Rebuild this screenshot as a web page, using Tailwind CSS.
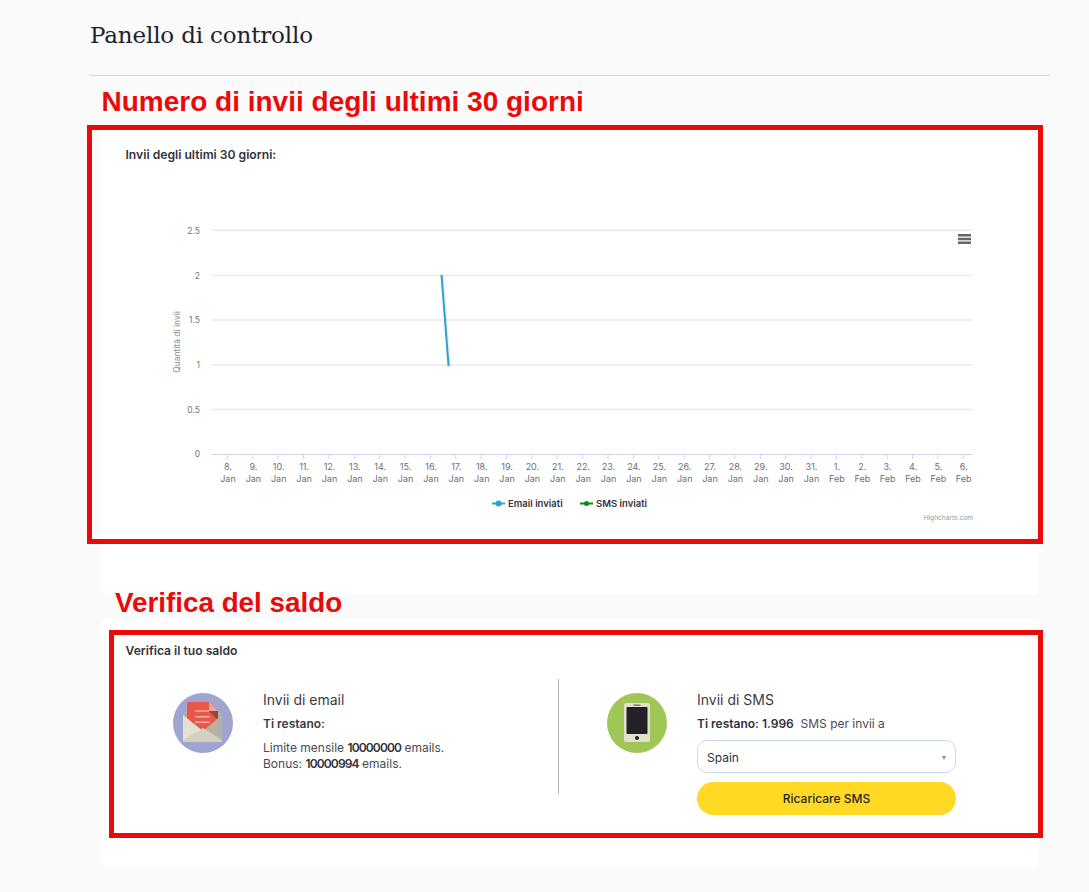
<!DOCTYPE html>
<html lang="it">
<head>
<meta charset="utf-8">
<title>Panello di controllo</title>
<script src="https://cdn.jsdelivr.net/npm/@tailwindcss/browser@4"></script>
</head>
<body class="bg-[#fafafa] font-['Inter',sans-serif] text-[#3b3b44] overflow-hidden">
<div class="relative w-[1089px] h-[892px] overflow-hidden pl-[90px] pr-[39px]">
  <div class="h-[76px] border-b border-[#d6d9de] pt-[20px]">
    <h1 class="font-['DejaVu_Serif',serif] text-[23px] leading-[30px] tracking-[-0.16px] font-normal text-[#1c2230]">Panello di controllo</h1>
  </div>

  <section class="mx-[11px] mt-[52px] h-[467px] bg-white rounded-lg pt-[20px]">
    <h2 class="pl-[24.5px] text-[12.150px] leading-[14px] font-semibold text-[#33333b]">Invii degli ultimi 30 giorni:</h2>
    <svg class="block mt-[8px] font-['Inter',sans-serif]" width="938" height="360" viewBox="101 170 938 360" xmlns="http://www.w3.org/2000/svg">
      <g stroke="#eaeaed" stroke-width="1.5">
        <line x1="211" x2="973" y1="230.2" y2="230.2"/>
        <line x1="211" x2="973" y1="275.5" y2="275.5"/>
        <line x1="211" x2="973" y1="320" y2="320"/>
        <line x1="211" x2="973" y1="365" y2="365"/>
        <line x1="211" x2="973" y1="409.5" y2="409.5"/>
      </g>
      <line x1="211" x2="973" y1="454.5" y2="454.5" stroke="#ccd6eb"/>
      <g stroke="#ccd6eb">
        <path d="M227.5 454v5M252.9 454v5M278.2 454v5M303.6 454v5M329 454v5M354.4 454v5M379.7 454v5M405.1 454v5M430.5 454v5M455.8 454v5M481.2 454v5M506.6 454v5M531.9 454v5M557.3 454v5M582.7 454v5M608.1 454v5M633.4 454v5M658.8 454v5M684.2 454v5M709.5 454v5M734.9 454v5M760.3 454v5M785.6 454v5M811 454v5M836.4 454v5M861.8 454v5M887.1 454v5M912.5 454v5M937.9 454v5M963.2 454v5"/>
      </g>
      <g fill="#74747b" font-size="8.5" text-anchor="end">
        <text x="200" y="234">2.5</text>
        <text x="200" y="279">2</text>
        <text x="200" y="323">1.5</text>
        <text x="200" y="368">1</text>
        <text x="200" y="413">0.5</text>
        <text x="200" y="457">0</text>
      </g>
      <text transform="translate(180 342) rotate(-90)" text-anchor="middle" fill="#85858c" font-size="8.5">Quantità di invii</text>
      <path d="M441.5 275 L448.5 365 L449.5 365" fill="none" stroke="#000" stroke-opacity="0.08" stroke-width="3" transform="translate(1 1)"/>
      <path d="M441.5 275 L448.5 365 L449.5 365" fill="none" stroke="#2aa3cf" stroke-width="2"/>
      <g fill="#6e6e75" font-size="9" text-anchor="middle">
        <text x="228" y="470">8.</text><text x="228" y="482">Jan</text>
        <text x="253.4" y="470">9.</text><text x="253.4" y="482">Jan</text>
        <text x="278.7" y="470">10.</text><text x="278.7" y="482">Jan</text>
        <text x="304.1" y="470">11.</text><text x="304.1" y="482">Jan</text>
        <text x="329.5" y="470">12.</text><text x="329.5" y="482">Jan</text>
        <text x="354.9" y="470">13.</text><text x="354.9" y="482">Jan</text>
        <text x="380.2" y="470">14.</text><text x="380.2" y="482">Jan</text>
        <text x="405.6" y="470">15.</text><text x="405.6" y="482">Jan</text>
        <text x="431" y="470">16.</text><text x="431" y="482">Jan</text>
        <text x="456.3" y="470">17.</text><text x="456.3" y="482">Jan</text>
        <text x="481.7" y="470">18.</text><text x="481.7" y="482">Jan</text>
        <text x="507.1" y="470">19.</text><text x="507.1" y="482">Jan</text>
        <text x="532.4" y="470">20.</text><text x="532.4" y="482">Jan</text>
        <text x="557.8" y="470">21.</text><text x="557.8" y="482">Jan</text>
        <text x="583.2" y="470">22.</text><text x="583.2" y="482">Jan</text>
        <text x="608.6" y="470">23.</text><text x="608.6" y="482">Jan</text>
        <text x="633.9" y="470">24.</text><text x="633.9" y="482">Jan</text>
        <text x="659.3" y="470">25.</text><text x="659.3" y="482">Jan</text>
        <text x="684.7" y="470">26.</text><text x="684.7" y="482">Jan</text>
        <text x="710" y="470">27.</text><text x="710" y="482">Jan</text>
        <text x="735.4" y="470">28.</text><text x="735.4" y="482">Jan</text>
        <text x="760.8" y="470">29.</text><text x="760.8" y="482">Jan</text>
        <text x="786.1" y="470">30.</text><text x="786.1" y="482">Jan</text>
        <text x="811.5" y="470">31.</text><text x="811.5" y="482">Jan</text>
        <text x="836.9" y="470">1.</text><text x="836.9" y="482">Feb</text>
        <text x="862.3" y="470">2.</text><text x="862.3" y="482">Feb</text>
        <text x="887.6" y="470">3.</text><text x="887.6" y="482">Feb</text>
        <text x="913" y="470">4.</text><text x="913" y="482">Feb</text>
        <text x="938.4" y="470">5.</text><text x="938.4" y="482">Feb</text>
        <text x="963.7" y="470">6.</text><text x="963.7" y="482">Feb</text>
      </g>
      <path d="M958 235.200h13M958 239h13M958 242.800h13" stroke="#666" stroke-width="2.500"/>
      <line x1="492" x2="505" y1="503.5" y2="503.5" stroke="#2aa3cf" stroke-width="2"/>
      <circle cx="498.5" cy="503.5" r="3" fill="#2aa3cf"/>
      <text x="508" y="507" font-size="9.5" font-weight="600" fill="#33333b">Email inviati</text>
      <line x1="580" x2="593" y1="503.5" y2="503.5" stroke="#0a8a1e" stroke-width="2"/>
      <circle cx="586.5" cy="503.5" r="2.5" fill="#0a8a1e"/>
      <text x="596" y="507" font-size="9.5" font-weight="600" fill="#33333b">SMS inviati</text>
      <text x="973" y="519.500" text-anchor="end" font-size="6.6" fill="#9a9aa0">Highcharts.com</text>
    </svg>
  </section>

  <section class="mx-[11px] mt-[24px] h-[249px] bg-white rounded-lg pt-[25px]">
    <h2 class="pl-[24.5px] text-[12.150px] leading-[14px] font-semibold text-[#33333b]">Verifica il tuo saldo</h2>
    <div class="flex items-start mt-[21px]">
      <div class="w-[457px] pl-[72px] pt-[14px] flex gap-[30px]">
        <svg class="shrink-0" width="60" height="60" viewBox="0 0 60 60" xmlns="http://www.w3.org/2000/svg">
          <circle cx="30" cy="30" r="30" fill="#9fa5d0"/>
          <path d="M10 21 L14 17 H45 L49 21 V47 a2 2 0 0 1 -2 2 H12 a2 2 0 0 1 -2 -2 Z" fill="#b3b09f"/>
          <path d="M14 11 a2 2 0 0 1 2 -2 H36 L45 18 V34 L30 43 L14 34 Z" fill="#e8574a"/>
          <path d="M36 18 H45 V27 Z" fill="#8a4a3f"/>
          <path d="M36 9 L45 18 H36 Z" fill="#f6a497"/>
          <path d="M22 18h14M22 23.700h15M22 29.300h15" stroke="#f6b1a6" stroke-width="1.500"/>
          <path d="M10 22 L30 38 L10 48 Z" fill="#e4e1d3"/>
          <path d="M49 22 L30 38 L49 48 Z" fill="#b5b2a1"/>
          <path d="M10 47 L30 35 L49 47 V47.500 a1.500 1.500 0 0 1 -1.500 1.500 H11.500 a1.500 1.500 0 0 1 -1.500 -1.500 Z" fill="#d3d0c0"/>
        </svg>
        <div>
          <h3 class="text-[14px] leading-[16px] mt-[-1px] font-normal">Invii di email</h3>
          <p class="text-[12px] leading-[16px] font-semibold mt-[8px]">Ti restano:</p>
          <p class="text-[12px] leading-[15.500px] mt-[8px] text-[#4a4a52]">Limite mensile <b class="font-semibold tracking-[-0.85px] text-[#33333b]">10000000</b> emails.<br>Bonus: <b class="font-semibold tracking-[-0.85px] text-[#33333b]">10000994</b> emails.</p>
        </div>
      </div>
      <div class="w-px h-[115px] bg-[#b4b4b4]"></div>
      <div class="pl-[48px] pt-[14px] flex gap-[30px]">
        <svg class="shrink-0" width="60" height="60" viewBox="0 0 60 60" xmlns="http://www.w3.org/2000/svg">
          <circle cx="30" cy="30" r="30" fill="#a0c655"/>
          <rect x="17" y="10" width="26" height="39" rx="2" fill="#e2dfcf"/>
          <rect x="19.500" y="14" width="21" height="27" rx="1" fill="#232127"/>
          <rect x="26.500" y="11.500" width="7" height="1.300" fill="#6d6c64"/>
          <circle cx="30" cy="45" r="2" fill="#232127"/>
        </svg>
        <div class="w-[259px]">
          <h3 class="text-[14px] leading-[16px] mt-[-1px] font-normal">Invii di SMS</h3>
          <p class="text-[12px] leading-[16px] mt-[8px] text-[#4a4a52] whitespace-pre"><b class="font-semibold text-[#33333b]">Ti restano: 1.996</b>  SMS per invii a</p>
          <div class="mt-[8px] h-[33px] flex items-center justify-between border border-[#c9d9ea] rounded-[10px] pl-[9px] pr-[9px] pt-[2px] text-[12px] text-[#2f3340]">
            <span>Spain</span>
            <span class="w-0 h-0 border-x-[2.500px] border-x-transparent border-t-[4px] border-t-[#888]"></span>
          </div>
          <button class="mt-[9px] w-full h-[33px] rounded-full bg-[#ffd923] text-[12px] font-medium text-[#26262b]">Ricaricare SMS</button>
        </div>
      </div>
    </div>
  </section>

  <!-- Red annotations lying over the page -->
  <div class="absolute left-[87px] top-[125px] w-[956px] h-[419px] border-[5px] border-[#ea0a0a]"></div>
  <div class="absolute left-[109px] top-[630px] w-[934px] h-[208px] border-[5px] border-[#ea0a0a]"></div>
  <div class="absolute left-[101.500px] top-[85px] font-['Liberation_Sans',sans-serif] font-bold text-[28px] leading-[34px] text-[#ea0a0a]">Numero di invii degli ultimi 30 giorni</div>
  <div class="absolute left-[115px] top-[586px] font-['Liberation_Sans',sans-serif] font-bold text-[27.800px] leading-[34px] text-[#ea0a0a]">Verifica del saldo</div>
</div>
</body>
</html>
